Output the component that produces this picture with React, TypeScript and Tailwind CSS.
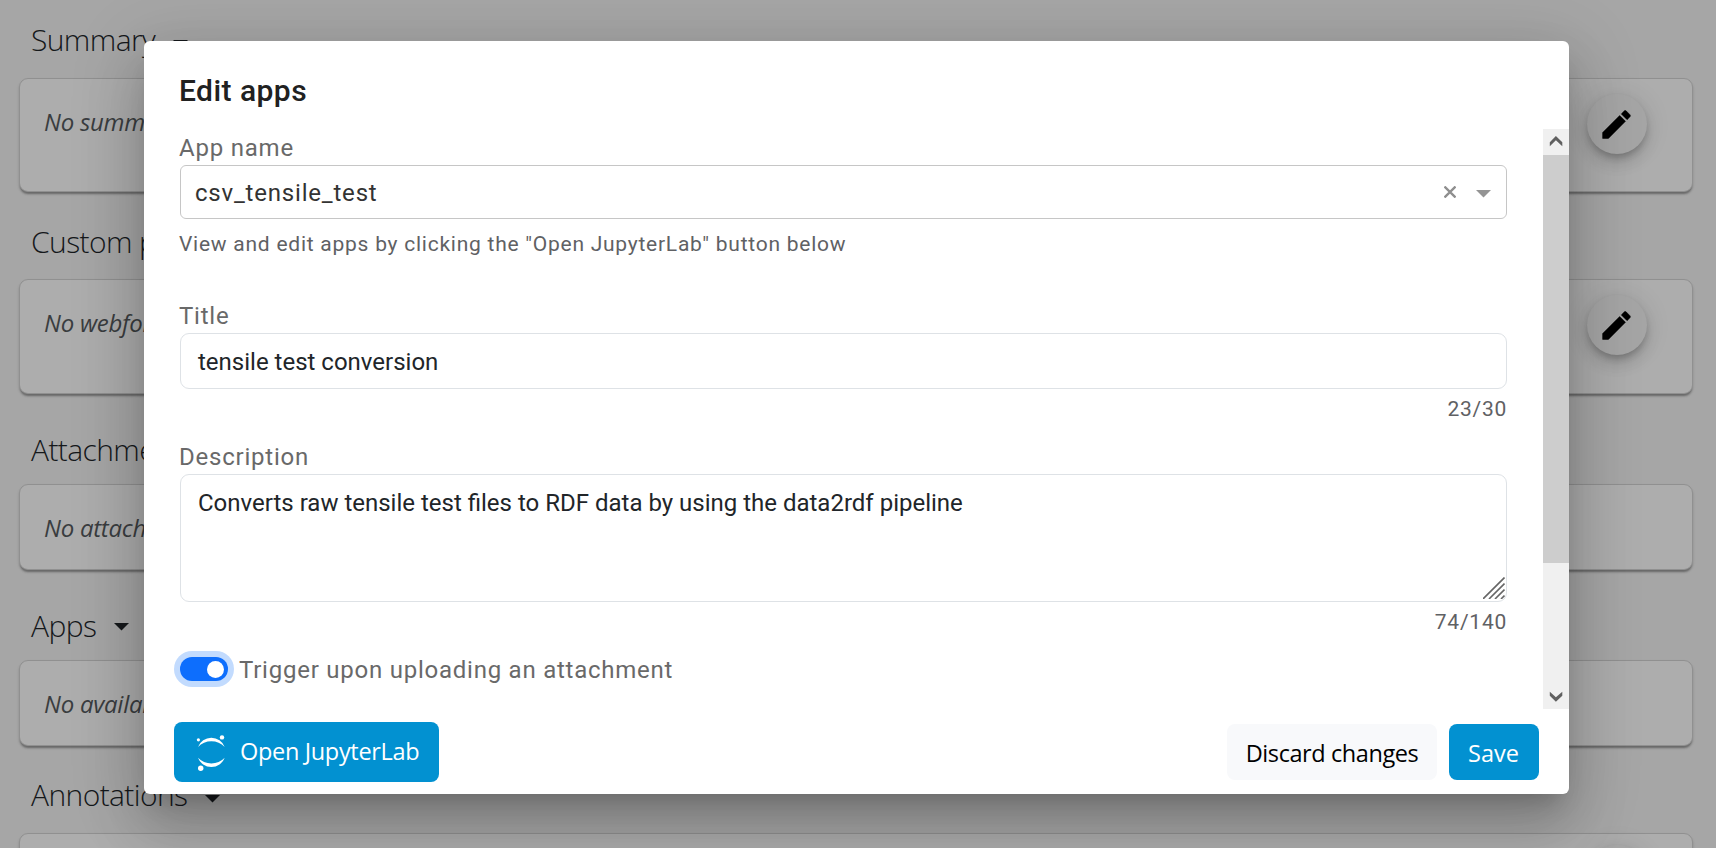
import React from 'react';
import clsx from 'clsx';

type SectionProps = {
  title: string;
  note: string;
  heading: string;
  caret: string;
  card: string;
  edit?: string;
};

const sections: SectionProps[] = [
  { title: 'Summary', note: 'No summary', heading: 'h-[78px] pt-[22px]', caret: 'mt-[18px]', card: 'h-[114px]', edit: 'mt-[15px]' },
  { title: 'Custom properties', note: 'No webform', heading: 'h-[87px] pt-[32px]', caret: 'mt-[18px]', card: 'h-[115px]', edit: 'mt-[15px]' },
  { title: 'Attachments', note: 'No attachments', heading: 'h-[90px] pt-[38px]', caret: 'mt-[17px]', card: 'h-[86px]' },
  { title: 'Apps', note: 'No available apps', heading: 'h-[90px] pt-[38px]', caret: 'mt-[15px]', card: 'h-[86px]' },
  { title: 'Annotations', note: '', heading: 'h-[87px] pt-[31px]', caret: 'mt-[18px]', card: 'h-[115px]', edit: 'mt-[11px]' },
];

function Caret({ className }: { className?: string }) {
  return (
    <svg className={clsx('h-[7.5px] w-[15px] shrink-0', className)} viewBox="0 0 15 7.5" fill="currentColor">
      <path d="M0 0H15L7.5 7.5Z" />
    </svg>
  );
}

function EditButton({ className }: { className: string }) {
  return (
    <button
      className={clsx(
        'flex size-[60px] shrink-0 items-center justify-center rounded-full bg-[#a5a5a5] pr-px text-black shadow-[0_4.5px_7.5px_-1.5px_rgba(0,0,0,0.2),0_9px_15px_rgba(0,0,0,0.12),0_1.5px_27px_rgba(0,0,0,0.1)]',
        className,
      )}
    >
      <svg className="size-[37px]" viewBox="0 0 24 24" fill="currentColor" stroke="currentColor" strokeWidth="0.35">
        <path d="M20.71,7.04C21.1,6.65 21.1,6 20.71,5.63L18.37,3.29C18,2.9 17.35,2.9 16.96,3.29L15.12,5.12L18.87,8.87ZM3,17.25V21H6.75L17.81,9.93L14.06,6.18L3,17.25Z" />
      </svg>
    </button>
  );
}

function Section({ title, note, heading, caret, card, edit }: SectionProps) {
  return (
    <section>
      <div className={clsx('flex items-start gap-[18px] pl-[31px] text-[#15181b]', heading)}>
        <h4 className="text-[30px] leading-[36px] font-light tracking-[-0.6px]">{title}</h4>
        <Caret className={caret} />
      </div>
      <div
        className={clsx(
          'mr-[23px] ml-[19px] flex items-start justify-between rounded-[9px] border border-[#909090] bg-[#adadad] pr-[45px] pl-6 shadow-[0_3px_2px_-1px_rgba(0,0,0,0.28),0_2px_3px_rgba(0,0,0,0.14)]',
          card,
        )}
      >
        <p className="pt-[25px] text-2xl leading-[36px] tracking-[-0.25px] text-[#3a3d40] italic">{note}</p>
        {edit && <EditButton className={edit} />}
      </div>
    </section>
  );
}

function Label({ children }: { children: React.ReactNode }) {
  return <label className="-ml-px block h-[35px] text-2xl leading-[36px] tracking-[0.78px] text-[#696969]">{children}</label>;
}

function JupyterIcon() {
  return (
    <svg className="h-[38px] w-9" viewBox="0 0 36 38" fill="currentColor">
      <path d="M6 14A14.2 14.2 0 0 1 32.7 14A18.5 18.5 0 0 0 6 14Z" />
      <path d="M6 24.7A14.2 14.2 0 0 0 32.7 24.7A18.5 18.5 0 0 1 6 24.7Z" />
      <circle cx="6.4" cy="6.8" r="1.6" />
      <circle cx="30" cy="4.4" r="2.2" />
      <circle cx="8.7" cy="35.2" r="2.7" />
    </svg>
  );
}

function Scrollbar() {
  return (
    <div className="flex w-[26px] flex-col bg-[#f0f0f0] text-[#606060]">
      <svg className="size-[26px]" viewBox="0 0 26 26" fill="currentColor">
        <path d="M12.9 7L19.3 13.2V17.2L12.9 11.3L6.8 17.2V13.2Z" />
      </svg>
      <div className="h-[408px] bg-[#cdcdcd]" />
      <div className="flex-1" />
      <svg className="size-[26px]" viewBox="0 0 26 26" fill="currentColor">
        <path d="M6.8 8.7V12.7L12.9 18.7L19.3 12.7V8.7L12.9 14.3Z" />
      </svg>
    </div>
  );
}

function EditDialog() {
  return (
    <div
      role="dialog"
      className="flex h-[753px] w-[1425px] flex-col overflow-hidden rounded-md bg-white font-[Roboto,sans-serif] shadow-[0_16.5px_22.5px_-10.5px_rgba(0,0,0,0.2),0_36px_57px_4.5px_rgba(0,0,0,0.14),0_13.5px_69px_12px_rgba(0,0,0,0.12)]"
    >
      <h2 className="h-[88px] pt-[30px] pl-[35px] text-[30px] leading-[40px] font-medium tracking-[0.45px] text-[#212121]">
        Edit apps
      </h2>
      <div className="flex h-[580px]">
        <div className="flex flex-1 flex-col pt-px pr-9 pl-9">
          <Label>App name</Label>
          <div className="flex h-[54px] items-center rounded-md border border-[#c6c6c6] pr-[15px] pl-[14px]">
            <span className="flex-1 pt-px text-2xl tracking-[0.8px] text-[#333333]">csv_tensile_test</span>
            <svg className="mr-5 size-3 text-[#8f8f8f]" viewBox="0 0 12 12" fill="none" stroke="currentColor" strokeWidth="2.3">
              <path d="M0.5 0.5L11.5 11.5M11.5 0.5L0.5 11.5" />
            </svg>
            <Caret className="mt-[4px] text-[#949494]" />
          </div>
          <p className="mt-[10px] -ml-px h-[30px] text-[21px] leading-[30px] tracking-[0.75px] text-[#5f6164]">
            View and edit apps by clicking the "Open JupyterLab" button below
          </p>
          <div className="h-[39px]" />
          <Label>Title</Label>
          <div className="flex h-14 items-center rounded-[9px] border border-[#dee2e6] px-[17px] pt-px text-2xl text-[#212529]">
            tensile test conversion
          </div>
          <p className="mt-[5px] h-[30px] text-right text-[21px] leading-[30px] tracking-[0.75px] text-[#5f6164]">23/30</p>
          <div className="h-[15px]" />
          <Label>Description</Label>
          <div className="flex h-32 items-start justify-between rounded-[9px] border border-[#dee2e6] pr-px pl-[17px] text-[#212529]">
            <span className="pt-[10px] text-2xl leading-[36px]">
              Converts raw tensile test files to RDF data by using the data2rdf pipeline
            </span>
            <svg className="mb-[2px] size-[22px] self-end text-[#666666]" viewBox="0 0 22 22" stroke="currentColor" strokeWidth="1.6">
              <path d="M0 22L21.5 0.5M6 22L21.5 6.5M12 22L21.5 12.5M18 22L21.5 18.5" />
            </svg>
          </div>
          <p className="mt-[5px] h-[30px] text-right text-[21px] leading-[30px] tracking-[0.75px] text-[#5f6164]">74/140</p>
          <div className="mt-5 flex h-6 items-center gap-[11px]">
            <div className="flex h-6 w-12 items-center justify-end rounded-full bg-[#0d6efd] pr-1 ring-6 ring-[#c2dbfe]">
              <div className="size-[17px] rounded-full bg-white" />
            </div>
            <span className="pt-[2px] text-2xl leading-[26px] tracking-[0.76px] text-[#696969]">Trigger upon uploading an attachment</span>
          </div>
        </div>
        <Scrollbar />
      </div>
      <div className="flex h-[84px] items-start pt-[13px] pr-[30px] pl-[30px] font-['Open_Sans',sans-serif] text-[23.5px] tracking-[-0.32px]">
        <button className="flex h-[60px] w-[265px] items-center gap-3 rounded-[8px] bg-[#0291d1] pl-[18px] text-white">
          <JupyterIcon />
          <span className="pb-px">Open JupyterLab</span>
        </button>
        <div className="mt-[2px] ml-auto flex gap-3">
          <button className="flex h-14 w-[210px] items-center justify-center rounded-[8px] bg-[#f8f9fb] pt-[3px] tracking-[-0.42px] text-black">
            Discard changes
          </button>
          <button className="flex h-14 w-[90px] items-center justify-center rounded-[8px] bg-[#0291d1] pt-[3px] pr-px tracking-normal text-white">
            Save
          </button>
        </div>
      </div>
    </div>
  );
}

export default function App() {
  return (
    <div className="relative h-[848px] w-[1716px] overflow-hidden bg-[#a6a6a6] font-['Open_Sans',sans-serif]">
      <main>
        {sections.map((s) => (
          <Section key={s.title} {...s} />
        ))}
      </main>
      <div className="absolute inset-0 flex items-start pt-[41px] pl-36">
        <EditDialog />
      </div>
    </div>
  );
}
